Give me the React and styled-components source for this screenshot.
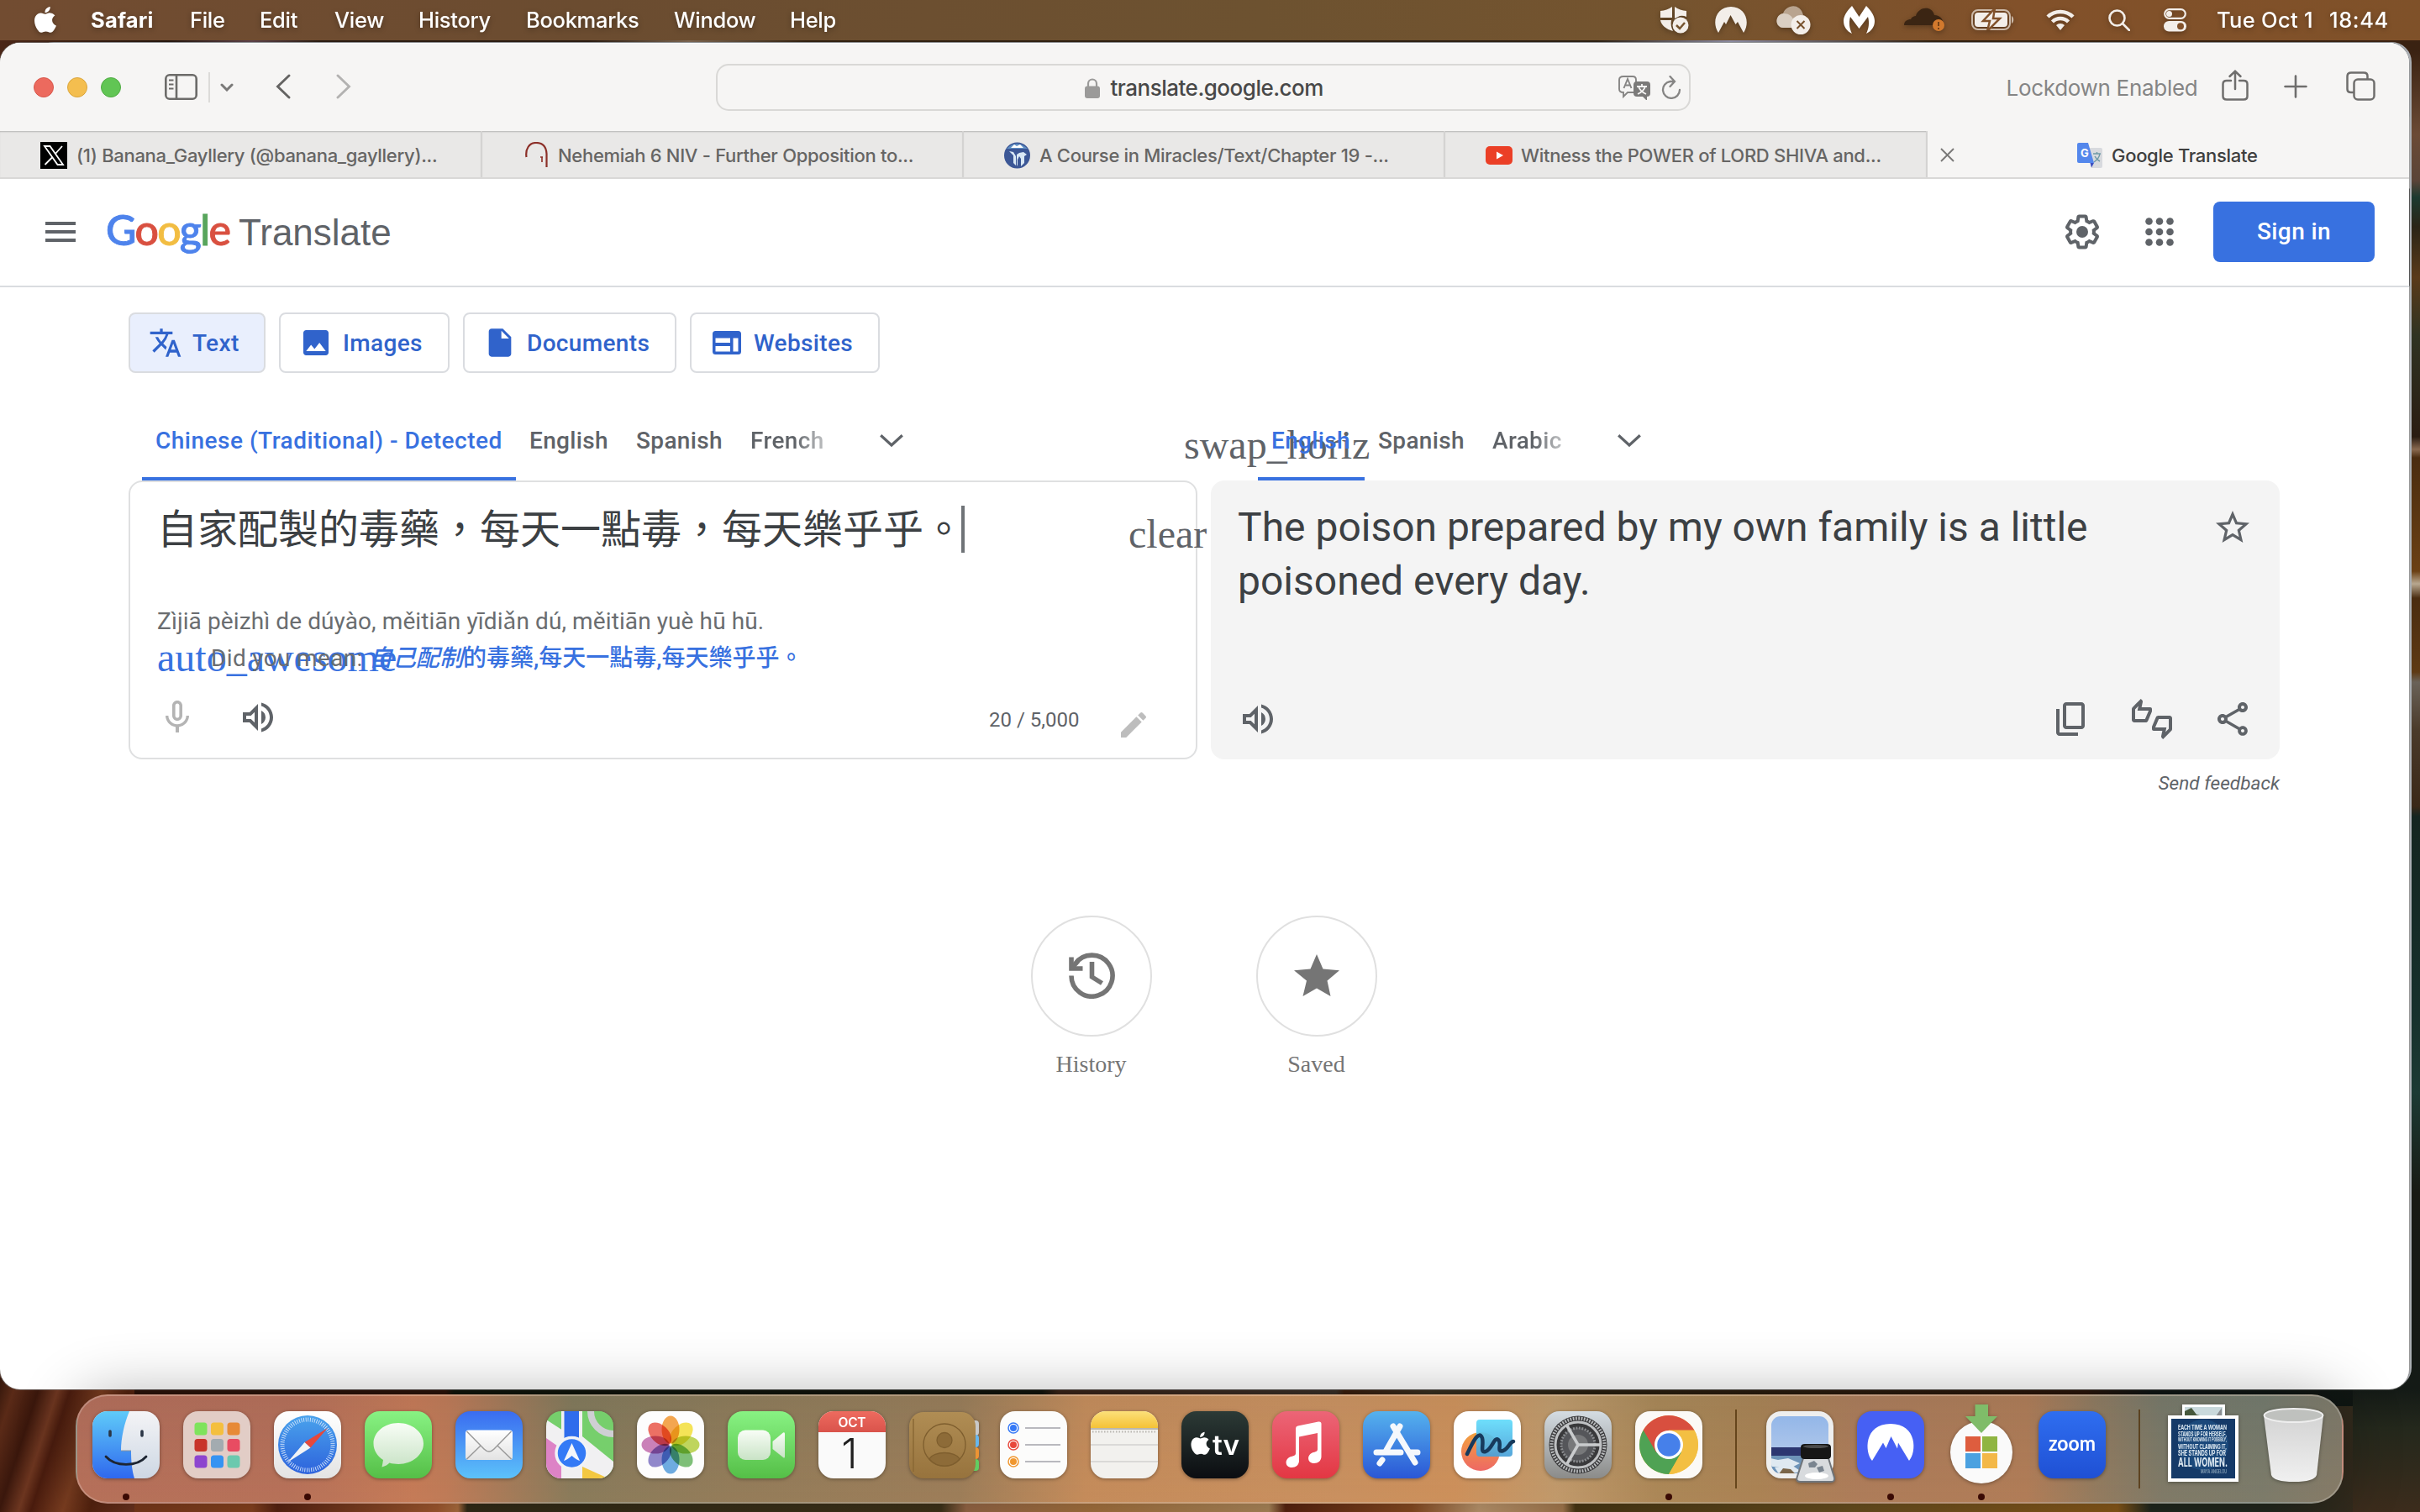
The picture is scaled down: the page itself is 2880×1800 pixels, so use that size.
import React from "react";
import styled, { createGlobalStyle, css } from "styled-components";
import {
  MdTranslate,
  MdImage,
  MdInsertDriveFile,
  MdMenu,
  MdMicNone,
  MdEdit,
  MdStarBorder,
  MdOutlineThumbsUpDown,
  MdOutlineShare,
} from "react-icons/md";

const GlobalStyle = createGlobalStyle`
  * { box-sizing: border-box; }
  html, body { margin: 0; padding: 0; overflow: hidden; }
  svg { display: block; flex: none; }
`;

const ui = `Inter, "Liberation Sans", sans-serif`;
const roboto = `Roboto, "Noto Sans CJK TC", sans-serif`;
const serif = `"Liberation Serif", serif`;

/* ---------- desktop ---------- */

const Desktop = styled.div`
  position: relative;
  width: 2880px;
  height: 1800px;
  overflow: hidden;
  font-family: ${ui};
  background:
    linear-gradient(180deg, #3a2212 0, #3a2212 60px, #6b4a35 160px, #5a4438 215px, #1c3a30 235px, #2a2416 270px, #5a3a1a 330px, #2f3322 400px, #2a1c12 520px, #8a6a50 535px, #4a2c10 545px, #6b4014 680px, #b8a890 695px, #4a2c10 712px, #5e3a14 800px, #6a6258 812px, #4a3a2a 870px, #3a2818 960px, #142520 972px, #16302c 1200px, #1c3a34 1300px, #181a14 1420px, #141a16 1654px, #24281c 1700px, #3c2c1c 1800px) 2800px 0 / 80px 1800px no-repeat,
    linear-gradient(108deg, #33160b 0, #5a2a17 20px, #3a170c 48px, #6d3620 70px, #4a1c0e 84px, #7a3d20 120px, #55230f 150px, #6d3420 200px) 0 1640px / 160px 160px no-repeat,
    linear-gradient(90deg, #2c130a 0, #2c130a 530px, #10140b 540px, #12140c 1240px, #3a2418 1260px, #3a3028 1590px, #3a1d0c 1600px, #3a3020 1700px, #2b2010 1900px, #2a160a 2480px, #0f1614 2560px, #101612 2880px) 0 1640px / 2880px 34px no-repeat,
    linear-gradient(90deg, #6b2f17 0, #8a4420 300px, #5a2412 330px, #a45a30 520px, #b07040 545px, #332c18 556px, #40341a 1120px, #9a6a48 1150px, #a8743f 1300px, #b08a5c 1510px, #5a2410 1530px, #8a4c22 1680px, #c09a70 1760px, #a87c50 1860px, #4a3814 1875px, #6a5020 2200px, #8a5a1a 2520px, #20281e 2560px, #23281e 2700px, #3c2c1c 2860px) 0 1670px / 2880px 130px no-repeat,
    linear-gradient(90deg, #4a2616 0, #24160e 200px, #5a4048 300px, #2a1c12 380px, #2a1c12 700px, #7a6450 820px, #302010 960px, #2c2014 1900px, #8a8aa0 2060px, #302010 2300px, #3a2212 2880px);
`;

const MenuBar = styled.header`
  display: flex;
  justify-content: space-between;
  height: 48px;
  padding: 0 37px 1px 41px;
  color: #fff;
  background: linear-gradient(90deg, #724c31 0, #6b4c30 700px, #6d5230 1500px, #74542f 1950px, #82512a 2400px, #7f5129 2880px);
`;

const MenuGroup = styled.div`
  display: flex;
  align-items: center;
  filter: drop-shadow(0 2px 3px rgba(0, 0, 0, 0.3));
`;

const MenuText = styled.span`
  width: ${(p) => p.$w}px;
  margin-left: ${(p) => p.$gap ?? 43}px;
  font-size: 25.5px;
  font-weight: ${(p) => (p.$bold ? 700 : 500)};
  letter-spacing: ${(p) => p.$ls ?? -0.3}px;
  line-height: 46px;
  white-space: nowrap;
`;

const MenuIcon = styled.svg`
  margin-left: ${(p) => p.$gap}px;
`;

/* ---------- windows ---------- */

const BackWindow = styled.div`
  position: absolute;
  left: 40px;
  top: 50px;
  width: 2830px;
  height: 1602px;
  border-radius: 24px;
  border: 2px solid #a9adb2;
  background: linear-gradient(180deg, #c2c7ce 0, #c2c7ce 86px, #dcdcdc 88px, #dcdcdc 172px, #262626 173px, #262626 288px, #c9c9c9 289px, #c9c9c9 100%);
`;

const Window = styled.main`
  position: absolute;
  left: 0;
  top: 51px;
  width: 2867px;
  height: 1603px;
  display: flex;
  flex-direction: column;
  overflow: hidden;
  border-radius: 24px;
  background: #fff;
  box-shadow: 0 0 0 1px rgba(120, 120, 120, 0.6);
`;

const Toolbar = styled.div`
  display: flex;
  align-items: center;
  height: 105px;
  flex: none;
  background: #f6f5f4;
  border-top: 1px solid #fff;
`;

const Lights = styled.div`
  display: flex;
  gap: 16px;
  margin-left: 40px;
`;

const Light = styled.i`
  width: 24px;
  height: 24px;
  border-radius: 50%;
  background: ${(p) => p.$c};
  border: 1px solid ${(p) => p.$b};
`;

const ToolIcon = styled.svg`
  margin-left: ${(p) => p.$gap}px;
  margin-bottom: ${(p) => p.$lift ?? 2}px;
`;

const ToolDivider = styled.i`
  width: 1.5px;
  height: 36px;
  margin-left: 13px;
  background: #dcdbd9;
`;

const AddressBar = styled.div`
  display: flex;
  align-items: center;
  width: 1160px;
  height: 56px;
  margin-left: 434px;
  padding: 0 9px 0 437px;
  border: 2px solid #d9d8d6;
  border-radius: 15px;
`;

const Address = styled.span`
  flex: 1;
  margin-left: 13px;
  font-size: 26px;
  font-weight: 500;
  letter-spacing: -0.5px;
  color: #484848;
`;

const Lockdown = styled.span`
  width: 226px;
  margin-left: 376px;
  font-size: 26px;
  letter-spacing: -0.3px;
  white-space: nowrap;
  color: #858585;
`;

const TabStrip = styled.div`
  display: grid;
  grid-template-columns: 574px 573px 573px 574px 1fr;
  height: 57px;
  flex: none;
  border-bottom: 2px solid #d9d8d7;
  background: #e9e8e7;
`;

const Tab = styled.div`
  display: flex;
  align-items: center;
  gap: ${(p) => p.$gap ?? 11}px;
  padding: 2px 0 0 ${(p) => p.$pad}px;
  font-size: 22px;
  font-weight: 500;
  letter-spacing: -0.3px;
  white-space: nowrap;
  color: #666564;
  border-right: 2px solid #d4d3d2;
  box-shadow: inset 0 2px 2px -1px #b4b3b2;
  ${(p) =>
    p.$active &&
    css`
      color: #3e3e3e;
      background: #f6f5f4;
      border-right: 0;
      box-shadow: none;
    `}
`;

const TabClose = styled.svg`
  margin-right: 135px;
`;

/* ---------- translate page ---------- */

const PageHeader = styled.div`
  display: flex;
  align-items: center;
  height: 129px;
  flex: none;
  padding: 0 41px 2px 48px;
  border-bottom: 2px solid #dadce0;
  color: #5f6368;
`;

const Brand = styled.div`
  display: flex;
  align-items: baseline;
  margin: 0 0 6px 30px;
`;

const Wordmark = styled.span`
  width: 158px;
  font-family: Lato, sans-serif;
  font-size: 50px;
  font-weight: 500;
  letter-spacing: -1.7px;
`;

const Letter = styled.span`
  color: ${(p) => p.$c};
  -webkit-text-stroke: 0.9px ${(p) => p.$c};
`;

const Product = styled.span`
  font-family: "Liberation Sans", sans-serif;
  font-size: 44px;
`;

const HeaderActions = styled.div`
  display: flex;
  align-items: center;
  margin-left: auto;
`;

const AppsIcon = styled.svg`
  margin-left: 44px;
`;

const SignIn = styled.button`
  width: 192px;
  height: 72px;
  margin-left: 40px;
  border: 0;
  border-radius: 8px;
  background: #3871e0;
  color: #fff;
  font: 500 28px ${roboto};
  letter-spacing: 0.4px;
`;

const Modes = styled.nav`
  display: flex;
  gap: 16px;
  flex: none;
  padding: 30px 0 0 153px;
`;

const ModeButton = styled.button`
  display: flex;
  align-items: center;
  width: ${(p) => p.$w}px;
  height: 72px;
  padding: 0 0 0 22px;
  gap: 12px;
  border: 2px solid #dadce0;
  border-radius: 8px;
  background: ${(p) => (p.$on ? "#e9effd" : "#fff")};
  color: #3063cb;
  font: 500 28px ${roboto};
  letter-spacing: 0.35px;
`;

const LangRow = styled.div`
  display: grid;
  grid-template-columns: 1328px 1fr;
  flex: none;
  height: 128px;
  padding: 32px 0 0 169px;
  position: relative;
`;

const LangSide = styled.div`
  display: flex;
`;

const Lang = styled.div`
  width: ${(p) => p.$w}px;
  height: 96px;
  padding-left: 16px;
  line-height: 97px;
  font-family: ${roboto};
  font-size: 28px;
  font-weight: 500;
  letter-spacing: ${(p) => p.$ls ?? 0.35}px;
  white-space: nowrap;
  color: ${(p) => (p.$on ? "#3871e0" : "#5f6368")};
  border-bottom: ${(p) => (p.$on ? "4px solid #3871e0" : "0")};
  position: relative;
  z-index: ${(p) => (p.$on ? 2 : 0)};
  ${(p) =>
    p.$fade &&
    css`
      color: transparent;
      background: linear-gradient(90deg, #5f6368 65%, #b4b6b8 92%);
      background-clip: text;
      -webkit-background-clip: text;
    `}
`;

const LangMore = styled.svg`
  margin: 41px 0 0 ${(p) => p.$gap}px;
`;

const Ligature = styled.span`
  position: absolute;
  left: ${(p) => p.$x}px;
  top: ${(p) => p.$y}px;
  z-index: 1;
  font-family: ${serif};
  font-size: 48px;
  line-height: 48px;
  white-space: nowrap;
  color: ${(p) => p.$c ?? "#5f6368"};
`;

const Panels = styled.section`
  display: grid;
  grid-template-columns: 1272px 1272px;
  gap: 16px;
  flex: none;
  height: 332px;
  padding-left: 153px;
`;

const Source = styled.div`
  position: relative;
  display: flex;
  flex-direction: column;
  padding: 22px 30px 0 32px;
  border: 2px solid #dfe0e1;
  border-radius: 16px;
`;

const SourceText = styled.div`
  display: flex;
  align-items: flex-start;
  height: 66px;
  font: 48px/60px "Noto Sans CJK TC", sans-serif;
  color: #3c4043;
`;

const Caret = styled.i`
  width: 4px;
  height: 56px;
  margin: 6px 0 0 -3px;
  background: #6f7377;
`;

const Pinyin = styled.div`
  margin-top: 56px;
  font: 28px/44px ${roboto};
  color: #6a6d70;
  letter-spacing: 0.1px;
`;

const Suggestion = styled.div`
  position: relative;
  z-index: 2;
  padding-left: 64px;
  font: 28px/44px ${roboto};
  letter-spacing: 0.35px;
  color: #6a6d70;
  white-space: pre;
`;

const Correction = styled.a`
  letter-spacing: 0;
  color: #3871e0;
  font-weight: 500;
`;

const SourceTools = styled.div`
  display: flex;
  align-items: center;
  height: 48px;
  margin-top: 24px;
  color: #5f6368;
  svg + svg { margin-left: 48px; }
`;

const Counter = styled.span`
  width: 109px;
  margin: 6px 0 0 auto;
  font: 24px ${roboto};
`;

const PencilSlot = styled.span`
  width: 40px;
  margin: 18px 24px 0 43px;
  color: #bdbdbd;
`;

const Target = styled.div`
  display: flex;
  flex-direction: column;
  justify-content: space-between;
  padding: 24px 32px 24px 32px;
  border-radius: 16px;
  background: #f4f4f4;
  color: #5f6368;
`;

const TargetTop = styled.div`
  display: flex;
  justify-content: space-between;
`;

const TargetText = styled.p`
  width: 1060px;
  margin: 0;
  font: 48px/64px ${roboto};
  color: #3c4043;
`;

const StarSlot = styled.span`
  margin: 8px 0 0 0;
`;

const TargetTools = styled.div`
  display: flex;
  align-items: center;
  gap: 48px;
`;

const Spacer = styled.span`
  flex: 1;
`;

const Feedback = styled.div`
  flex: none;
  height: 186px;
  padding: 14px 154px 0 0;
  text-align: right;
  font: italic 22.6px/30px ${roboto};
  color: #5f6368;
`;

const Shortcuts = styled.div`
  display: flex;
  justify-content: center;
  gap: 124px;
  padding-right: 2px;
`;

const Shortcut = styled.div`
  display: flex;
  flex-direction: column;
  align-items: center;
  gap: 15px;
  width: 144px;
  font: 28px/36px ${serif};
  color: #757575;
`;

const Circle = styled.span`
  display: grid;
  place-items: center;
  width: 144px;
  height: 144px;
  padding-bottom: 2px;
  border: 2px solid #e0e0e0;
  border-radius: 50%;
`;

/* ---------- dock ---------- */

const DockBar = styled.footer`
  position: absolute;
  left: 90px;
  top: 1660px;
  width: 2699px;
  height: 130px;
  display: flex;
  padding: 18px 0 0 18px;
  border-radius: 38px;
  border: 2px solid rgba(255, 255, 255, 0.22);
  background:
    linear-gradient(0deg, rgba(220, 130, 80, 0.12), rgba(80, 40, 40, 0.06)),
    linear-gradient(90deg, #b16e5b 0, #b26f5a 250px, #c27a58 400px, #bb7a58 440px, #7f7a5c 590px, #8b7c5b 780px, #957d5a 1050px, #c28d5c 1200px, #c79261 1500px, #cb925c 1640px, #bd9c6e 1760px, #a68858 1880px, #a58355 2000px, #a87c5b 2120px, #ab7c58 2320px, #8b7a60 2400px, #74796a 2480px, #707a6d 2600px, #7c7a6a 2699px);
  box-shadow: 0 0 70px rgba(0, 0, 0, 0.3);
`;

const DockItem = styled.div`
  position: relative;
  width: 108px;
  height: 108px;
  flex: none;
`;

const DockSvg = styled.svg`
  overflow: visible;
  filter: drop-shadow(0 1px 2px rgba(0, 0, 0, 0.35));
`;

const RunningDot = styled.i`
  position: absolute;
  left: 36px;
  top: 98px;
  width: 8px;
  height: 8px;
  border-radius: 50%;
  background: #3a0a04;
`;

const DockDivider = styled.i`
  flex: none;
  width: 2px;
  height: 94px;
  margin: -2px ${(p) => p.$after}px 0 11px;
  background: rgba(80, 50, 10, 0.75);
`;

function Defs() {
  const g = (id, a, b) => (
    <linearGradient id={id} key={id} x1="0" y1="0" x2="0" y2="1">
      <stop offset="0" stopColor={a} />
      <stop offset="1" stopColor={b} />
    </linearGradient>
  );
  return (
    <defs>
      {g("blue", "#5fcbf9", "#2f68ee")}
      {g("blueUp", "#3a6cf0", "#5cc2fa")}
      {g("face", "#f4f4f6", "#cdd7e4")}
      {g("green", "#88f283", "#55bf47")}
      {g("bubble", "#f8fdf6", "#c9e3c6")}
      {g("white", "#ffffff", "#e3e3e3")}
      {g("red", "#ee6b5f", "#d9534b")}
      {g("tan", "#b08d54", "#97733d")}
      {g("yellow", "#fce07a", "#f5c236")}
      {g("black", "#2c3a36", "#0b0d11")}
      {g("music", "#ec6577", "#e33743")}
      {g("store", "#55b2ee", "#2a57d6")}
      {g("grey", "#d4dce2", "#8b8b89")}
      {g("cyan", "#63dcfb", "#4aa0d8")}
      {g("coral", "#f2a23e", "#ee6864")}
      {g("zoomblue", "#2f6ef0", "#1f50d4")}
      {g("sky", "#8fb4e8", "#c3d3ec")}
      {g("trash", "#d9d9d9", "#f7f7f7")}
      {g("compass", "#4aa3ec", "#2d62dc")}
    </defs>
  );
}

const Tile = ({ fill }) => <rect width="80" height="80" rx="18" fill={fill} />;

const petals = ["#f29a38", "#f3df3f", "#b6cf46", "#6cb665", "#5aa0dc", "#8277c4", "#c370ae", "#ea5c4e"];

const icons = {
  finder: (
    <>
      <clipPath id="tile"><rect width="80" height="80" rx="18" /></clipPath>
      <g clipPath="url(#tile)">
        <rect width="80" height="80" fill="url(#face)" />
        <path d="M0 0H44C38 14 34 32 34 47H46C46 60 47 70 50 80H0Z" fill="url(#blue)" />
      </g>
      <path d="M34 47H46" stroke="#8a929c" strokeWidth="1" />
      <path d="M21 24v5M59 24v5" stroke="#2b3646" strokeWidth="3.6" strokeLinecap="round" />
      <path d="M16 54C27 66.500 53 66.500 64 54" fill="none" stroke="#1d2532" strokeWidth="2.800" strokeLinecap="round" />
    </>
  ),
  launchpad: (
    <>
      <Tile fill="#e2cdc6" />
      {["#7fe35c", "#f4bf3f", "#e78a37", "#c8352b", "#a3abb0", "#e84c62", "#8d45cf", "#3593f2", "#6bc9ae"].map((c, i) => (
        <rect key={c} x={13.500 + (i % 3) * 19.500} y={13.500 + Math.floor(i / 3) * 19.500} width="15" height="15" rx="3.500" fill={c} />
      ))}
    </>
  ),
  safari: (
    <>
      <Tile fill="url(#white)" />
      <circle cx="40" cy="40" r="35" fill="url(#compass)" />
      <circle cx="40" cy="40" r="30" fill="none" stroke="#d5e6fb" strokeWidth="5" strokeDasharray="0.900 1.720" />
      <path d="M64 20L43.500 43.500 36.500 37Z" fill="#e5483b" />
      <path d="M16 61L36.500 37 43.500 43.500Z" fill="#f2f4f6" />
    </>
  ),
  messages: (
    <>
      <Tile fill="url(#green)" />
      <path d="M40 14c-16.500 0-29.500 11-29.500 24.500 0 8 4.500 15 11.500 19.500-.5 3-1 6-1.500 8.500 4-1 7-3 9-5 3.300 1 6.800 1.400 10.500 1.400C56.500 63 70 52 70 38.500S56.500 14 40 14Z" fill="url(#bubble)" />
    </>
  ),
  mail: (
    <>
      <Tile fill="url(#blueUp)" />
      <rect x="12" y="22.500" width="56" height="35.500" rx="3.500" fill="url(#white)" />
      <path d="M13.500 24L34 45c4 4 8 4 12 0L66.500 24M13.500 57L30 41M66.500 57L50 41" fill="none" stroke="#9b9b9b" strokeWidth="1.500" />
    </>
  ),
  maps: (
    <>
      <g clipPath="url(#tile)">
        <rect width="80" height="80" fill="#76cf6c" />
        <path d="M0 10L80 62V80H0Z" fill="#f1f0f2" />
        <path d="M0 32L20 46V80H0Z" fill="#dd83c6" />
        <path d="M43 66L74 80H43Z" fill="#f3c842" />
        <path d="M43 0V36L80 48V0Z" fill="#76cf6c" />
        <path d="M43 30L80 60V70L43 48Z" fill="#f1f0f2" />
        <circle cx="80" cy="0" r="27" fill="none" stroke="#cfcfd4" strokeWidth="8" />
        <path d="M18 0H43V80H18Z" fill="#f1f0f2" />
        <path d="M21.500 0H39V40H21.500Z" fill="#2f6cec" />
      </g>
      <circle cx="30.500" cy="50" r="18.500" fill="#347af6" stroke="#f1f2f6" strokeWidth="3.500" />
      <path d="M30.500 38L40 59Q36 58 30.500 53 25 58 21 59Z" fill="#f4f6fa" />
    </>
  ),
  photos: (
    <>
      <Tile fill="#fdfdfd" />
      <g style={{ isolation: "isolate" }}>
        {petals.map((c, i) => (
          <ellipse key={c} cx="40" cy="22" rx="10.500" ry="16.500" fill={c} opacity="0.88" transform={`rotate(${i * 45} 40 40)`} style={{ mixBlendMode: "multiply" }} />
        ))}
      </g>
    </>
  ),
  facetime: (
    <>
      <Tile fill="url(#green)" />
      <rect x="12" y="22.500" width="39" height="35.500" rx="9" fill="url(#bubble)" />
      <path d="M53.500 36L66 25.500Q68 24.500 68 27V54Q68 56.500 66 55L53.500 45Z" fill="url(#bubble)" />
    </>
  ),
  calendar: (
    <>
      <Tile fill="#fafafa" />
      <path d="M0 25V18A18 18 0 0 1 18 0H62A18 18 0 0 1 80 18V25Z" fill="url(#red)" />
      <text x="40" y="19" textAnchor="middle" fontFamily="Inter, sans-serif" fontWeight="600" fontSize="15.500" textLength="33" fill="#fff">OCT</text>
      <text x="37" y="68" textAnchor="middle" fontFamily="Inter, sans-serif" fontWeight="300" fontSize="49" fill="#1f1f1f">1</text>
    </>
  ),
  contacts: (
    <>
      <rect x="70" y="11" width="13" height="18" rx="4" fill="#c9c9c9" />
      <rect x="70" y="28" width="13" height="15" rx="4" fill="#67b7ec" />
      <rect x="70" y="43" width="13" height="14" rx="4" fill="#ee9433" />
      <rect x="70" y="57" width="13" height="14" rx="4" fill="#62cd62" />
      <rect y="1" width="79" height="79" rx="17" fill="url(#tan)" />
      <path d="M5 9V72" stroke="#8a6935" strokeWidth="1.500" />
      <g fill="#8d6b38" stroke="#7e5e2e" strokeWidth="1.300">
        <circle cx="42" cy="40" r="25" fill="none" />
        <circle cx="42" cy="34.500" r="9" />
        <path d="M24 57c5-10 31-10 36 0-9 11-27 11-36 0Z" />
      </g>
    </>
  ),
  reminders: (
    <>
      <Tile fill="#fcfcfb" />
      {["#3478f6", "#e8483c", "#f0972f"].map((c, i) => (
        <g key={c}>
          <circle cx="16" cy={20 + i * 20} r="6" fill="#fff" stroke={c} strokeWidth="1.500" />
          <circle cx="16" cy={20 + i * 20} r="4" fill={c} />
          <path d={`M30 ${20 + i * 20}H72`} stroke="#b9b9be" strokeWidth="2" />
        </g>
      ))}
    </>
  ),
  notes: (
    <>
      <Tile fill="#f2f1ee" />
      <path d="M0 20V18A18 18 0 0 1 18 0H62A18 18 0 0 1 80 18V20Z" fill="url(#yellow)" />
      <path d="M0 21H80" stroke="#a9a59a" strokeWidth="1.500" />
      <path d="M2 24.500H79" stroke="#b7b5af" strokeWidth="1.800" strokeDasharray="1.500 2" />
      <path d="M0 40H80M0 60H80" stroke="#d2d1d0" strokeWidth="1.500" />
    </>
  ),
  tv: (
    <>
      <Tile fill="url(#black)" />
      <g transform="translate(8.500 25) scale(0.9)" fill="#fff">
        <path d="M23.500 15.400c0-3.700 3-5.400 3.200-5.500-1.800-2.600-4.500-2.900-5.400-3-2.300-.2-4.500 1.400-5.700 1.400s-3-1.300-4.900-1.300C8.200 7 5.900 8.500 4.600 10.700c-2.700 4.600-.7 11.500 1.900 15.200 1.300 1.800 2.800 3.900 4.800 3.800 1.900-.1 2.700-1.200 5-1.200s3 1.200 5 1.200c2.100 0 3.400-1.800 4.700-3.700 1.500-2.100 2.100-4.200 2.100-4.300-.1 0-4.600-1.800-4.600-6.300ZM19.700 4.500c1-1.300 1.700-3 1.500-4.800-1.500.1-3.300 1-4.400 2.300-.9 1.100-1.800 2.900-1.500 4.600 1.600.1 3.300-.9 4.400-2.100Z" />
      </g>
      <text x="37" y="51.500" fontFamily="Inter, sans-serif" fontWeight="600" fontSize="32" textLength="32" lengthAdjust="spacingAndGlyphs" fill="#fff">tv</text>
    </>
  ),
  music: (
    <>
      <Tile fill="url(#music)" />
      <path d="M28 20.500Q28 18 30.500 17.500L55 12.500Q58.500 12 58.500 15V54c0 5-4 8-8.500 8-9 0-9-11-1-13 4-1 5-1.500 5-4V26L32 30.500V59c0 5-4 8-8.500 8-9 0-9-11-1-13 4-1 5.500-1.500 5.500-4Z" fill="#fff" />
    </>
  ),
  appstore: (
    <>
      <Tile fill="url(#store)" />
      <g stroke="#f5f8fc" strokeWidth="7" strokeLinecap="round">
        <path d="M44 18L27 48M36 18L62 61M16 49H45M56 49H65M23 58L20 62" />
      </g>
    </>
  ),
  freeform: (
    <>
      <Tile fill="#fff" />
      <ellipse cx="32" cy="48" rx="23" ry="23" fill="url(#coral)" />
      <rect x="27" y="10" width="43" height="44" rx="4" fill="url(#cyan)" opacity="0.93" />
      <path d="M16 51C23 36 30 22 34 32 36 40 31 50 38 48 46 45 48 30 53 34 58 38 50 50 59 47 66 44 66 37 71 36" fill="none" stroke="#173a5c" strokeWidth="4.500" strokeLinecap="round" />
    </>
  ),
  settings: (
    <>
      <Tile fill="url(#grey)" />
      <circle cx="40" cy="40" r="34.500" fill="#39393b" />
      <circle cx="40" cy="40" r="31.500" fill="none" stroke="#b7b9bb" strokeWidth="4" strokeDasharray="1.800 1.500" />
      <circle cx="40" cy="40" r="27" fill="none" stroke="#bfc1c3" strokeWidth="3" />
      <circle cx="40" cy="40" r="20" fill="#55565a" stroke="#8a8c8f" strokeWidth="3" strokeDasharray="2 1.500" />
      <circle cx="40" cy="40" r="12" fill="#77787a" />
      <path d="M40 40H66M40 40L27 17.500M40 40L27 62.500" stroke="#c9cbcd" strokeWidth="3.500" />
    </>
  ),
  chrome: (
    <>
      <Tile fill="#fbf9f6" />
      <circle cx="40" cy="40" r="35" fill="#f3bf42" />
      <path d="M40 40L9.700 22.500A35 35 0 0 0 40 75L55 49Z" fill="#4fa254" />
      <path d="M40 22.500H70.300A35 35 0 0 1 40 75L55.200 48.700Z" fill="#f3bf42" />
      <path d="M9.700 22.500A35 35 0 0 1 70.300 22.500H40L25 49Z" fill="#d84f3f" />
      <circle cx="40" cy="40" r="17" fill="#fff" />
      <circle cx="40" cy="40" r="13.800" fill="#4680ea" />
    </>
  ),
  preview: (
    <>
      <Tile fill="#eeeeee" />
      <clipPath id="photo"><rect x="6" y="6" width="68" height="68" rx="11" /></clipPath>
      <g clipPath="url(#photo)">
        <rect width="80" height="80" fill="url(#sky)" />
        <rect y="43" width="80" height="11" fill="#2c3670" />
        <rect y="53" width="80" height="27" fill="#6d93b8" />
        <path d="M0 55l14 3 12-2 14 6-12 6-28-3ZM10 67l20-3 12 8-26 4Z" fill="#dfe9f1" />
        <path d="M14 76l6-8 9 1 6 6-4 5H16Z" fill="#7a6549" />
      </g>
      <path d="M44 56H74L81 79Q82 84 77 84H41Q35 84 36.500 79Z" fill="#d8dbde" stroke="#70757a" strokeWidth="2" />
      <path d="M50 62l7-3 4 4-3 4h-7ZM60 67l7-2 2 6-6 2Z" fill="#7a8590" />
      <ellipse cx="60" cy="77" rx="14" ry="4" fill="#fff" />
      <path d="M41 43Q41 39 46 39H72Q77 39 77 43V53Q77 57 72 57H46Q41 57 41 53Z" fill="#161616" />
      <ellipse cx="59" cy="42" rx="15" ry="2" fill="#4b4b4b" />
    </>
  ),
  nord: (
    <>
      <Tile fill="#4660f4" />
      <path d="M18 59C9 49 8 15 40 15S71 49 62 59L49 37.500 48 44.500 40.500 30 34.500 44 31 37.500Z" fill="#fff" />
    </>
  ),
  installer: (
    <>
      <ellipse cx="40" cy="49" rx="37" ry="37" fill="#fafafa" />
      <rect x="21" y="30" width="18" height="18" fill="#de5d3e" />
      <rect x="41" y="30" width="18" height="18" fill="#8fb542" />
      <rect x="21" y="50" width="18" height="18" fill="#4ba1e0" />
      <rect x="41" y="50" width="18" height="18" fill="#f3b848" />
      <path d="M32.500 -8H48V6H59L40 26 21 6H32.500Z" fill="#7fbc69" />
    </>
  ),
  zoom: (
    <>
      <Tile fill="url(#zoomblue)" />
      <text x="12" y="46.500" fontFamily="Lato, sans-serif" fontWeight="700" fontSize="24.500" textLength="56" lengthAdjust="spacingAndGlyphs" fill="#fff">zoom</text>
    </>
  ),
};

const poster = [
  ["EACH TIME A WOMAN", 58, 22, 8],
  ["STANDS UP FOR HERSELF,", 58, 30, 7.5],
  ["WITHOUT KNOWING IT POSSIBLY,", 58, 36, 5.5],
  ["WITHOUT CLAIMING IT,", 58, 44.5, 8],
  ["SHE STANDS UP FOR", 57, 53, 9],
  ["ALL WOMEN.", 59, 66, 15],
];

const stackIcon = (
  <>
    <rect x="17" y="-8" width="51" height="24" fill="#fff" />
    <rect x="20" y="-5" width="45" height="20" fill="#c9d9dc" />
    <path d="M20 16V0l8-4 6 8 8 2 5 10Z" fill="#46583c" />
    <path d="M50 16L64-4V16Z" fill="#8b8f92" />
    <rect y="5" width="84" height="79" fill="#fff" />
    <rect x="4" y="9" width="76" height="71" fill="#153a68" />
    <ellipse cx="42" cy="40" rx="30" ry="30" fill="#1f5488" opacity="0.6" />
    {poster.map(([t, w, y, s]) => (
      <text key={t} x="12" y={y} fontFamily="Inter, sans-serif" fontWeight="700" fontSize={s} textLength={w} lengthAdjust="spacingAndGlyphs" fill="#dfeaf2">{t}</text>
    ))}
    <text x="39" y="73.500" fontFamily="Inter, sans-serif" fontWeight="600" fontSize="5.500" textLength="31" lengthAdjust="spacingAndGlyphs" fill="#8fa9bd">MAYA ANGELOU</text>
  </>
);

const trashIcon = (
  <>
    <path d="M0 5L9 76Q12 84 36 84T63 76L71 5Z" fill="url(#trash)" opacity="0.96" />
    <ellipse cx="35.500" cy="5" rx="35" ry="8" fill="#bfc1be" stroke="#eeeeee" strokeWidth="2" />
  </>
);

const dock = [
  ["finder", true], ["launchpad"], ["safari", true], ["messages"], ["mail"], ["maps"], ["photos"],
  ["facetime"], ["calendar"], ["contacts"], ["reminders"], ["notes"], ["tv"], ["music"],
  ["appstore"], ["freeform"], ["settings"], ["chrome", true],
];
const dockRecent = [["preview"], ["nord", true], ["installer", true], ["zoom"]];

const DockIcons = ({ items }) =>
  items.map(([name, running]) => (
    <DockItem key={name}>
      <DockSvg width="80" height="80" viewBox="0 0 80 80">{icons[name]}</DockSvg>
      {running && <RunningDot />}
    </DockItem>
  ));

const HiddenDefs = styled.svg`
  position: absolute;
`;

function Dock() {
  return (
    <DockBar>
      <HiddenDefs width="0" height="0"><Defs /></HiddenDefs>
      <DockIcons items={dock} />
      <DockDivider $after={35} />
      <DockIcons items={dockRecent} />
      <DockDivider $after={33} />
      <DockItem><DockSvg width="84" height="84" viewBox="0 0 84 84">{stackIcon}</DockSvg></DockItem>
      <DockItem><DockSvg width="84" height="84" viewBox="-6 0 84 84">{trashIcon}</DockSvg></DockItem>
    </DockBar>
  );
}

/* ---------- menu bar ---------- */

const menus = [["File", 40], ["Edit", 46], ["View", 57], ["History", 85], ["Bookmarks", 133], ["Window", 95], ["Help", 54]];

function TopMenu() {
  return (
    <MenuBar>
      <MenuGroup>
        <svg width="26" height="31" viewBox="3.3 -0.3 24.900 30.200" fill="#fff" preserveAspectRatio="none">
          <path d="M23.500 15.400c0-3.700 3-5.400 3.200-5.500-1.800-2.600-4.500-2.900-5.400-3-2.300-.2-4.500 1.400-5.700 1.400s-3-1.300-4.900-1.300C8.200 7 5.900 8.500 4.600 10.700c-2.700 4.600-.7 11.500 1.900 15.200 1.300 1.800 2.800 3.900 4.800 3.800 1.900-.1 2.700-1.200 5-1.200s3 1.200 5 1.200c2.100 0 3.400-1.800 4.700-3.700 1.500-2.100 2.100-4.200 2.100-4.300-.1 0-4.600-1.800-4.600-6.300ZM19.700 4.500c1-1.300 1.700-3 1.500-4.800-1.500.1-3.300 1-4.400 2.300-.9 1.100-1.800 2.900-1.500 4.600 1.600.1 3.300-.9 4.400-2.100Z" />
        </svg>
        <MenuText $w={75} $gap={41} $bold $ls={0.2}>Safari</MenuText>
        {menus.map(([t, w]) => <MenuText key={t} $w={w}>{t}</MenuText>)}
      </MenuGroup>
      <MenuGroup>
        <svg width="34" height="34" viewBox="0 0 34 34" fill="#f3eee9">
          <path d="M14 1v13H0V6C5 5.500 10 4 14 1ZM17 1c4 3 9 4.500 14 5v7a13 13 0 0 0-8-1l-6 3ZM0 17h13c-1 5 0 9 2 13-8-2-14-7-15-13Z" />
          <circle cx="24" cy="23" r="9.500" />
          <path d="M19 23l4 4 6-7" fill="none" stroke="#75542f" strokeWidth="2.500" />
        </svg>
        <MenuIcon $gap={31} width="38" height="31" viewBox="0 0 38 31" fill="#f3eee9">
          <path d="M4 31C-5 17 3 0 19 0S43 17 34 31L27 18 24.500 21 18.500 10 13 21 11 18Z" />
        </MenuIcon>
        <MenuIcon $gap={35} width="41" height="35" viewBox="0 0 41 35">
          <path d="M8 10C11 0 28-4 32 12 40 14 38 26 30 27H8C-2 26-2 12 8 10Z" fill="#b9a48f" />
          <path d="M8 10C16 10 22 14 22 27H8C-2 26-2 12 8 10Z" fill="#dacfc3" />
          <circle cx="29" cy="23.500" r="11.500" fill="#f3eee9" />
          <path d="M24.500 19l9 9M33.500 19l-9 9" stroke="#77512c" strokeWidth="2" />
        </MenuIcon>
        <MenuIcon $gap={39} width="37" height="33" viewBox="0 0 37 33" fill="#fff">
          <path d="M10 0l8.500 13L27 0c6 6 10 12 10 18 0 7-4 12-10 15 3-6 4-13 2-20L18.500 27 8 13c-2 7-1 14 2 20C4 30 0 25 0 18 0 12 4 6 10 0Z" />
        </MenuIcon>
        <MenuIcon $gap={35} width="48" height="29" viewBox="0 0 48 29">
          <path d="M0 21c0-5 4-7 8-7 1-3 4-4 6-4C17-1 33-3 36 9c7 0 11 5 11 12Z" fill="#3b2513" />
          <circle cx="41" cy="21" r="7" fill="#d2792d" />
          <path d="M41 17v5M41 24v2" stroke="#5a3010" strokeWidth="1.500" />
        </MenuIcon>
        <MenuIcon $gap={32} width="51" height="25" viewBox="0 0 51 25">
          <rect x="1" y="1" width="45" height="23" rx="7" fill="none" stroke="#cbb9a8" strokeWidth="2" />
          <rect x="4" y="4" width="39" height="17" rx="4" fill="#f3eee9" />
          <path d="M28-1L14 14h8l-3 12L34 11h-8Z" fill="#f3eee9" stroke="#82522b" strokeWidth="2.500" />
          <path d="M48 8c3 1 3 8 0 9Z" fill="#cbb9a8" />
        </MenuIcon>
        <MenuIcon $gap={38} width="34" height="25" viewBox="0 0 34 25" fill="none" stroke="#f3eee9" strokeWidth="4.500">
          <path d="M2 9a21.500 21.500 0 0 1 30 0M7.500 15a13.500 13.500 0 0 1 19 0" />
          <path d="M17 25l-5-6a7 7 0 0 1 10 0Z" fill="#f3eee9" stroke="none" />
        </MenuIcon>
        <MenuIcon $gap={40} width="26" height="26" viewBox="0 0 26 26" fill="none" stroke="#f3eee9" strokeWidth="2.600">
          <circle cx="10.500" cy="10.500" r="9" /><path d="M17 17l8 8" strokeLinecap="round" />
        </MenuIcon>
        <MenuIcon $gap={40} width="27" height="28" viewBox="0 0 27 28">
          <rect x="1.200" y="1.200" width="24.600" height="10.600" rx="5.300" fill="none" stroke="#f3eee9" strokeWidth="2.200" />
          <circle cx="6.500" cy="6.500" r="3.500" fill="#f3eee9" />
          <rect y="15" width="27" height="12.500" rx="6.200" fill="#f3eee9" />
          <circle cx="20" cy="21.200" r="4" fill="#82522b" />
        </MenuIcon>
        <MenuText $w={118} $gap={36} $ls={0.3}>Tue Oct 1</MenuText>
        <MenuText $w={71} $gap={16} $ls={0.6}>18:44</MenuText>
      </MenuGroup>
    </MenuBar>
  );
}

/* ---------- safari chrome ---------- */

function SafariToolbar() {
  return (
    <Toolbar>
      <Lights>
        <Light $c="#ec6a5e" $b="#d8574c" />
        <Light $c="#f4be4f" $b="#dba63c" />
        <Light $c="#61c554" $b="#50ac43" />
      </Lights>
      <ToolIcon $gap={52} width="39" height="31" viewBox="0 0 39 31" fill="none" stroke="#6c6b69" strokeWidth="2.600">
        <rect x="1.300" y="1.300" width="36.400" height="28.400" rx="4.500" />
        <path d="M14 1v29" /><path d="M5 7.500h5.500M5 12.500h5.500M5 17.500h5.500" strokeWidth="2" />
      </ToolIcon>
      <ToolDivider />
      <ToolIcon $gap={12} $lift={1} width="16" height="10" viewBox="0 0 16 10" fill="none" stroke="#7a7978" strokeWidth="3" strokeLinecap="round">
        <path d="M2 2l6 6 6-6" />
      </ToolIcon>
      <ToolIcon $gap={50} width="18" height="30" viewBox="0 0 18 30" fill="none" stroke="#656463" strokeWidth="2.900" strokeLinecap="round">
        <path d="M16 2L2.500 15 16 28" />
      </ToolIcon>
      <ToolIcon $gap={54} width="18" height="30" viewBox="0 0 18 30" fill="none" stroke="#b3b2b1" strokeWidth="2.900" strokeLinecap="round">
        <path d="M2 2l13.500 13L2 28" />
      </ToolIcon>
      <AddressBar>
        <svg width="18" height="25" viewBox="0 0 18 25">
          <path d="M4 12V7.500a5 5 0 0 1 10 0V12" fill="none" stroke="#9b9a99" strokeWidth="2.200" />
          <rect y="10.500" width="18" height="14.500" rx="3" fill="#9b9a99" />
        </svg>
        <Address>translate.google.com</Address>
        <svg width="39" height="29" viewBox="0 0 39 29">
          <path d="M6 1h11q4 0 4 4v13q0 2-3 2h-7l-5 5v-5q-5 0-5-4V5q0-4 5-4Z" fill="none" stroke="#868584" strokeWidth="1.900" />
          <path d="M6.500 15L11 4l4.500 11M8 11.500h6" fill="none" stroke="#868584" strokeWidth="1.900" />
          <path d="M22 7h12q4 0 4 4v10q0 4-4 4v5l-5-5h-7q-4 0-4-4V11q0-4 4-4Z" fill="#7b7a79" />
          <path d="M22 13h12M28 10v3M32 13q-2 6-9 9M24 13q2 6 9 9" fill="none" stroke="#f6f5f4" strokeWidth="1.800" />
        </svg>
        <ToolIcon $gap={11} $lift={0} width="25" height="28" viewBox="0 0 25 28" fill="none" stroke="#868584" strokeWidth="2.300" strokeLinecap="round">
          <path d="M16 7H11.500a10 10 0 1 0 11.500 10M11.500 1l5.500 6-5.500 6" />
        </ToolIcon>
      </AddressBar>
      <Lockdown>Lockdown Enabled</Lockdown>
      <ToolIcon $gap={30} $lift={5} width="32" height="37" viewBox="0 0 32 37" fill="none" stroke="#6f6e6d" strokeWidth="2.500" strokeLinecap="round">
        <path d="M11 13H6q-4.500 0-4.500 4v14.500q0 4 4.500 4h20q4.500 0 4.500-4V17q0-4-4.500-4h-5M16 23V2M9.500 8L16 1.800 22.500 8" />
      </ToolIcon>
      <ToolIcon $gap={42} $lift={3} width="28" height="28" viewBox="0 0 28 28" stroke="#6f6e6d" strokeWidth="2.600" strokeLinecap="round">
        <path d="M14 1.500v25M1.500 14h25" />
      </ToolIcon>
      <ToolIcon $gap={46} $lift={3} width="35" height="35" viewBox="0 0 35 35" fill="none" stroke="#6f6e6d" strokeWidth="2.500">
        <rect x="9.500" y="9.500" width="24" height="24" rx="4.500" />
        <path d="M9 25H6q-4.500 0-4.500-4V6Q1.500 1.500 6 1.500H21q4.500 0 4.500 4V9" />
      </ToolIcon>
    </Toolbar>
  );
}

function SafariTabs() {
  return (
    <TabStrip>
      <Tab $pad={48}>
        <svg width="32" height="32" viewBox="0 0 32 32">
          <rect width="32" height="32" />
          <path d="M5 5h6.500L27 27h-6.500ZM26 5L17.500 14.500M14 18.500L5.500 27" fill="none" stroke="#fff" strokeWidth="1.800" />
        </svg>
        (1) Banana_Gayllery (@banana_gayllery)...
      </Tab>
      <Tab $pad={51} $gap={12}>
        <svg width="27" height="31" viewBox="0 0 27 31" fill="none" stroke="#8c2f28">
          <path d="M1.500 18C0 8 5 1 13 1s12 5 12.500 13v16" strokeWidth="2.200" />
          <path d="M20 18v6M18 18h3" strokeWidth="1.600" />
        </svg>
        Nehemiah 6 NIV - Further Opposition to...
      </Tab>
      <Tab $pad={48}>
        <svg width="31" height="32" viewBox="0 0 31 32">
          <circle cx="15.500" cy="16" r="15.500" fill="#3c5796" />
          <path d="M3 8Q15-4 28 8Z" fill="#5f8fc4" />
          <path d="M8 7l4-4 3 2 4-2 4 4Z" fill="#fff" />
          <path d="M6 11l5 5v9l3 3V17l-3-5ZM15 15l3-2 5-1 4 3-3 2v8l-4 4v-9l-2-3-2 4v8l-1-2Z" fill="#d9e8f5" />
        </svg>
        A Course in Miracles/Text/Chapter 19 -...
      </Tab>
      <Tab $pad={48} $gap={10}>
        <svg width="32" height="22" viewBox="0 0 32 22"><rect width="32" height="22" rx="5" fill="#eb3f26" /><path d="M13 6.500v9l8-4.500Z" fill="#fff" /></svg>
        Witness the POWER of LORD SHIVA and...
      </Tab>
      <Tab $active $pad={15}>
        <TabClose width="17" height="17" viewBox="0 0 17 17" stroke="#7a7978" strokeWidth="1.900"><path d="M1 1l15 15M16 1L1 16" /></TabClose>
        <svg width="30" height="30" viewBox="0 0 30 30">
          <path d="M12 6H28q2 0 2 2V28q0 2-2 2H17Z" fill="#d8dade" />
          <path d="M19 13h9M23.500 11v2M27 13q-1 6-7 10M21 16q2 4 6 6" fill="none" stroke="#6f9aa6" strokeWidth="1.500" />
          <path d="M2 0H13L20 24H2q-2 0-2-2V2Q0 0 2 0Z" fill="#5487ec" />
          <path d="M15.500 24H20L17 29.500Z" fill="#3c4fc0" />
          <text x="4" y="17" fontFamily="Inter, sans-serif" fontWeight="700" fontSize="13" fill="#fff">G</text>
        </svg>
        Google Translate
      </Tab>
    </TabStrip>
  );
}

/* ---------- page ---------- */

const wordmark = [["G", "#4e83ec"], ["o", "#d95040"], ["o", "#f2bd42"], ["g", "#4e83ec"], ["l", "#58a55c"], ["e", "#d95040"]];

const Volume = () => (
  <svg width="48" height="48" viewBox="0 0 24 24" fill="currentColor">
    <path d="M3 9v6h4l5 5V4L7 9H3zm7-.17v6.340L7.830 13H5v-2h2.830L10 8.830zM16.500 12A4.500 4.500 0 0 0 14 7.970v8.050c1.480-.73 2.500-2.250 2.500-4.020zM14 3.230v2.060c2.890.86 5 3.540 5 6.710s-2.110 5.850-5 6.710v2.060c4.010-.91 7-4.490 7-8.770 0-4.280-2.990-7.860-7-8.770z" />
  </svg>
);

const Gear = () => (
  <svg width="48" height="48" viewBox="0 0 24 24" fill="currentColor">
    <path d="M13.850 22.250h-3.700c-.74 0-1.360-.54-1.450-1.270l-.27-1.890c-.27-.14-.53-.29-.79-.46l-1.800.72c-.7.26-1.470-.03-1.810-.65L2.200 15.530c-.35-.66-.2-1.440.36-1.880l1.530-1.190c-.01-.15-.02-.3-.02-.46 0-.15.01-.31.02-.46l-1.520-1.190c-.59-.45-.74-1.260-.37-1.880l1.850-3.190c.34-.62 1.110-.9 1.790-.63l1.810.73c.26-.17.52-.32.78-.46l.27-1.910c.09-.7.71-1.250 1.440-1.250h3.700c.74 0 1.360.54 1.450 1.270l.27 1.890c.27.14.53.29.79.46l1.800-.72c.71-.26 1.480.03 1.820.65l1.840 3.180c.36.66.2 1.440-.36 1.880l-1.520 1.190c.01.15.02.3.02.46s-.01.31-.02.46l1.520 1.190c.56.45.72 1.230.37 1.860l-1.860 3.220c-.34.62-1.110.9-1.800.63l-1.800-.72c-.26.17-.52.32-.78.46l-.27 1.910c-.1.68-.72 1.220-1.460 1.220zm-3.230-2h2.760l.37-2.550.53-.22c.44-.18.88-.44 1.340-.78l.45-.34 2.380.96 1.380-2.400-2.030-1.580.07-.56c.03-.26.06-.51.06-.78s-.03-.53-.06-.78l-.07-.56 2.030-1.580-1.390-2.400-2.390.96-.45-.35c-.42-.32-.87-.58-1.330-.77l-.52-.22-.37-2.550h-2.760l-.37 2.550-.53.21c-.44.19-.88.44-1.340.79l-.45.33-2.380-.95-1.390 2.390 2.030 1.580-.07.56a7 7 0 0 0-.06.79c0 .26.02.53.06.78l.07.56-2.030 1.580 1.380 2.400 2.390-.96.45.35c.43.33.86.58 1.330.77l.53.22.38 2.550z" />
    <circle cx="12" cy="12" r="3.500" />
  </svg>
);

const Apps = () => (
  <AppsIcon width="48" height="48" viewBox="0 0 48 48" fill="currentColor">
    {[11.500, 24, 36.500].map((y) => [11.500, 24, 36.500].map((x) => <circle key={`${x}-${y}`} cx={x} cy={y} r="4.300" />))}
  </AppsIcon>
);

const WebPage = () => (
  <svg width="40" height="40" viewBox="0 0 40 40" fill="currentColor">
    <path fillRule="evenodd" d="M6.500 6H33.500Q37 6 37 9.500V30.500Q37 34 33.500 34H6.500Q3 34 3 30.500V9.500Q3 6 6.500 6ZM6.500 14.500V20H24V14.500ZM6.500 24V30.500H24V24ZM27.500 14.500V30.500H33.500V14.500Z" />
  </svg>
);

const Chevron = ({ gap }) => (
  <LangMore $gap={gap} width="28" height="15" viewBox="0 0 28 15" fill="none" stroke="#5f6368" strokeWidth="3.200">
    <path d="M1.200 1.200L14 13 26.800 1.200" />
  </LangMore>
);

export default function App() {
  return (
    <Desktop>
      <GlobalStyle />
      <TopMenu />
      <BackWindow />
      <Window>
        <SafariToolbar />
        <SafariTabs />
        <PageHeader>
          <MdMenu size={48} />
          <Brand>
            <Wordmark>{wordmark.map(([l, c], i) => <Letter key={i} $c={c}>{l}</Letter>)}</Wordmark>
            <Product>Translate</Product>
          </Brand>
          <HeaderActions>
            <Gear />
            <Apps />
            <SignIn>Sign in</SignIn>
          </HeaderActions>
        </PageHeader>
        <Modes>
          <ModeButton $w={163} $on><MdTranslate size={40} />Text</ModeButton>
          <ModeButton $w={203}><MdImage size={40} />Images</ModeButton>
          <ModeButton $w={254}><MdInsertDriveFile size={40} />Documents</ModeButton>
          <ModeButton $w={226}><WebPage />Websites</ModeButton>
        </Modes>
        <LangRow>
          <LangSide>
            <Lang $w={445} $on $ls={0.5}>Chinese (Traditional) - Detected</Lang>
            <Lang $w={127}>English</Lang>
            <Lang $w={136}>Spanish</Lang>
            <Lang $w={106} $fade>French</Lang>
            <Chevron gap={64} />
          </LangSide>
          <LangSide>
            <Lang $w={127} $on>English</Lang>
            <Lang $w={136}>Spanish</Lang>
            <Lang $w={101} $fade>Arabic</Lang>
            <Chevron gap={64} />
          </LangSide>
          <Ligature $x={1409} $y={62}>swap_horiz</Ligature>
        </LangRow>
        <Panels>
          <Source>
            <SourceText>自家配製的毒藥，每天一點毒，每天樂乎乎。<Caret /></SourceText>
            <Ligature $x={1188} $y={38}>clear</Ligature>
            <Pinyin>Zìjiā pèizhì de dúyào, měitiān yīdiǎn dú, měitiān yuè hū hū.</Pinyin>
            <Suggestion>Did you mean: <Correction><i>自己配制</i>的毒藥,每天一點毒,每天樂乎乎。</Correction></Suggestion>
            <Ligature $x={32} $y={185} $c="#3871e0">auto_awesome</Ligature>
            <SourceTools>
              <MdMicNone size={48} color="#b4b4b4" />
              <Volume />
              <Counter>20 / 5,000</Counter>
              <PencilSlot><MdEdit size={40} /></PencilSlot>
            </SourceTools>
          </Source>
          <Target>
            <TargetTop>
              <TargetText>The poison prepared by my own family is a little poisoned every day.</TargetText>
              <StarSlot><MdStarBorder size={48} /></StarSlot>
            </TargetTop>
            <TargetTools>
              <Volume />
              <Spacer />
              <svg width="48" height="48" viewBox="0 -960 960 960" fill="currentColor">
                <path d="M360-240q-33 0-56.500-23.500T280-320v-480q0-33 23.500-56.500T360-880h360q33 0 56.500 23.500T800-800v480q0 33-23.500 56.500T720-240H360Zm0-80h360v-480H360v480ZM200-80q-33 0-56.500-23.500T120-160v-560h80v560h440v80H200Z" />
              </svg>
              <MdOutlineThumbsUpDown size={48} />
              <MdOutlineShare size={48} />
            </TargetTools>
          </Target>
        </Panels>
        <Feedback>Send feedback</Feedback>
        <Shortcuts>
          <Shortcut>
            <Circle>
              <svg width="56" height="56" viewBox="0 0 56 56" fill="none" stroke="#757575" strokeWidth="5.600">
                <path d="M4 28.500a24.500 24.500 0 1 0 4.500-14" />
                <path d="M4 6.500v13.500h13.500" />
                <path d="M5 19l7-8" />
                <path d="M28.500 12v18l12 7.500" />
              </svg>
            </Circle>
            History
          </Shortcut>
          <Shortcut>
            <Circle>
              <svg width="54" height="50" viewBox="0 0 54 50" fill="#757575">
                <path d="M27 0L34.500 17.500 54 19.200 39.500 31.500 43.500 50 27 40.500 10.500 50 15 31.500 0 19.200 19.500 17.500Z" />
              </svg>
            </Circle>
            Saved
          </Shortcut>
        </Shortcuts>
      </Window>
      <Dock />
    </Desktop>
  );
}
